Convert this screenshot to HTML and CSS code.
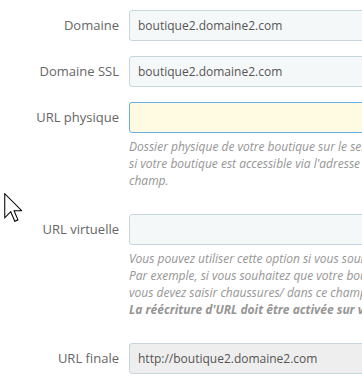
FILE: index.html
```html
<!DOCTYPE html>
<html lang="fr">
<head>
    <meta charset="UTF-8">
    <title>Boutique - URL</title>
    <link rel="stylesheet" href="styles.css">
</head>
<body>
    <form class="form-horizontal">
        <div class="form-group">
            <label class="control-label">Domaine</label>
            <div class="field">
                <input type="text" class="form-control" value="boutique2.domaine2.com">
            </div>
        </div>
        <div class="form-group">
            <label class="control-label">Domaine SSL</label>
            <div class="field">
                <input type="text" class="form-control" value="boutique2.domaine2.com">
            </div>
        </div>
        <div class="form-group">
            <label class="control-label">URL physique</label>
            <div class="field">
                <input type="text" class="form-control focused" value="">
                <p class="help-block">
                    Dossier physique de votre boutique sur le serveur (ex. : /prestashop/). Laissez ce champ vide<br>
                    si votre boutique est accessible via l'adresse racine du domaine, et ne remplissez pas ce<br>
                    champ.
                </p>
            </div>
        </div>
        <div class="form-group">
            <label class="control-label">URL virtuelle</label>
            <div class="field">
                <input type="text" class="form-control" value="">
                <p class="help-block">
                    Vous pouvez utiliser cette option si vous souhaitez créer une boutique avec une URL qui n'existe pas.<br>
                    Par exemple, si vous souhaitez que votre boutique soit accessible depuis www.exemple.com/chaussures/,<br>
                    vous devez saisir chaussures/ dans ce champ, en considérant que le domaine est www.exemple.com.<br>
                    <strong>La réécriture d'URL doit être activée sur votre serveur pour utiliser cette fonctionnalité.</strong>
                </p>
            </div>
        </div>
        <div class="form-group">
            <label class="control-label">URL finale</label>
            <div class="field">
                <input type="text" class="form-control" value="http://boutique2.domaine2.com" readonly>
            </div>
        </div>
    </form>

    <svg class="cursor" width="18" height="30" viewBox="0 0 12 20">
        <polygon points="0.5,0.5 0.5,16.5 4.5,12.5 7.2,18.8 9.3,17.9 6.7,11.8 11.8,11.8" fill="#fff" stroke="#000" stroke-width="0.7" stroke-linejoin="miter"/>
    </svg>
</body>
</html>
```

FILE: styles.css
```css
* { box-sizing: border-box; }
html, body {
    margin: 0;
    overflow: hidden;
}
body {
    background: #fff;
    font-family: 'Open Sans', sans-serif;
    color: #555;
    width: 362px;
    height: 388px;
    position: relative;
}

.form-horizontal {
    width: 900px;
    padding-top: 10px;
}

.form-group {
    display: flex;
    align-items: flex-start;
    margin-bottom: 15px;
}

.control-label {
    width: 120px;
    flex: none;
    text-align: right;
    padding-right: 1px;
    font-size: 13px;
    line-height: 31px;
    color: #666;
}

.field {
    margin-left: 9px;
    flex: 1;
}

.form-control {
    display: block;
    width: 100%;
    height: 31px;
    padding: 0 8px;
    font-family: 'Open Sans', sans-serif;
    font-size: 12px;
    color: #555;
    background: #f5f8f9;
    border: 1px solid #c7d6db;
    border-radius: 3px;
    outline: none;
}
.form-control.focused {
    background: #fffbe3;
    border-color: #66afe9;
}
.form-control[readonly] {
    background: #eee;
    border-color: #c7d6db;
}

.help-block {
    margin: 5px 0 10px;
    font-size: 12px;
    line-height: 17px;
    font-style: italic;
    color: #959595;
    white-space: nowrap;
}
.help-block strong {
    font-weight: 700;
}

.cursor {
    position: absolute;
    left: 4px;
    top: 193px;
}
```
